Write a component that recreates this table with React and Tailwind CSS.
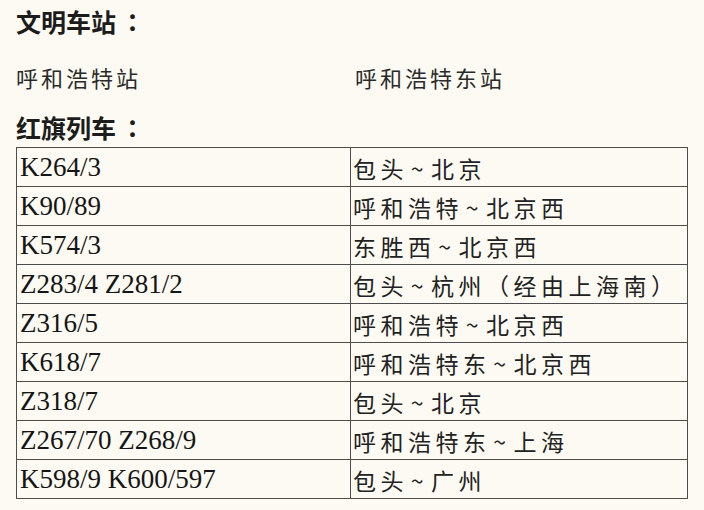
import React from 'react'

const trains = [
  ['K264/3', '包头~北京'],
  ['K90/89', '呼和浩特~北京西'],
  ['K574/3', '东胜西~北京西'],
  ['Z283/4 Z281/2', '包头~杭州（经由上海南）'],
  ['Z316/5', '呼和浩特~北京西'],
  ['K618/7', '呼和浩特东~北京西'],
  ['Z318/7', '包头~北京'],
  ['Z267/70 Z268/9', '呼和浩特东~上海'],
  ['K598/9 K600/597', '包头~广州'],
]

// route text: tilde gets a full character cell, brackets sit centred (TC punctuation)
const Route = ({ text }) => {
  const parts = text.split(/([~（）])/).filter(Boolean)
  return (
    <>
      {parts.map((p, i) => {
        if (p === '~') {
          return <span key={i} className="inline-block w-[23px] text-center">~</span>
        }
        if (p === '（' || p === '）') {
          return <span key={i} className="font-['Noto_Sans_CJK_TC',sans-serif]">{p}</span>
        }
        return <React.Fragment key={i}>{p}</React.Fragment>
      })}
    </>
  )
}

const App = () => {
  return (
    <div className="w-[704px] h-[510px] bg-[#fcfaf2] text-[#1c1c1c] pl-[16px] pt-[9px] overflow-hidden font-['Noto_Sans_CJK_SC',sans-serif]">
      {/* 文明车站 */}
      <h2 className="text-[25px] leading-[25px] font-semibold">
        文明车站<span className="ml-[4px] font-['Noto_Sans_CJK_TC',sans-serif]">：</span>
      </h2>

      <div className="flex mt-[32px] text-[22px] leading-[22px] tracking-[3px] text-[#2a2a2a]">
        <div className="w-[339px]">呼和浩特站</div>
        <div>呼和浩特东站</div>
      </div>

      {/* 红旗列车 */}
      <h2 className="mt-[27px] text-[25px] leading-[25px] font-semibold">
        红旗列车<span className="ml-[4px] font-['Noto_Sans_CJK_TC',sans-serif]">：</span>
      </h2>

      <div className="mt-[7px] w-[672px] grid grid-cols-[334px_337px] border-t border-l border-[#4d4d4d]">
        {trains.map(([code, route]) => (
          <React.Fragment key={code}>
            <div className="h-[39px] border-r border-b border-[#4d4d4d] pl-[3px] pt-[1px] text-[27px] leading-[37px] text-[#151515] whitespace-nowrap font-['Liberation_Serif','Noto_Sans_CJK_SC',serif]">
              {code}
            </div>
            <div className="h-[39px] border-r border-b border-[#4d4d4d] pl-[2px] pt-[3px] text-[23px] leading-[35px] tracking-[4.5px] text-[#222] whitespace-nowrap">
              <Route text={route} />
            </div>
          </React.Fragment>
        ))}
      </div>
    </div>
  )
}

export default App
